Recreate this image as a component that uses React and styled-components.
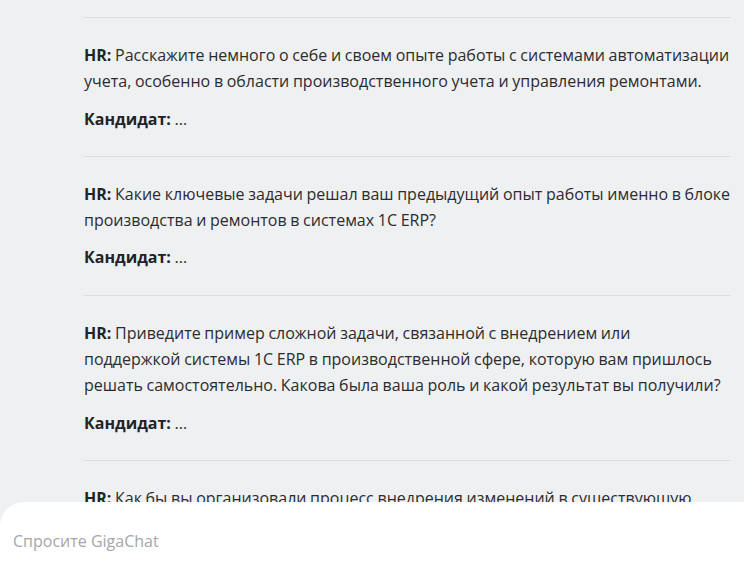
import React from 'react';
import styled, { createGlobalStyle } from 'styled-components';

const GlobalStyle = createGlobalStyle`
  html, body {
    margin: 0;
    padding: 0;
    background: #eff0f2;
  }
  body {
    font-family: "Open Sans", "Noto Sans", sans-serif;
    -webkit-font-smoothing: antialiased;
  }
`;

const Page = styled.div`
  height: 562px;
  display: flex;
  flex-direction: column;
  background: #eff0f2;
  overflow: hidden;
`;

const Feed = styled.div`
  flex: 1;
  min-height: 0;
  overflow: hidden;
  padding: 17px 13px 0 84px;
`;

const Question = styled.section`
  border-top: 1px solid #dcdde1;
  padding: 24px 0 24px;
`;

const Line = styled.p`
  margin: 0 0 ${({ $last }) => ($last ? '0' : '11px')};
  max-width: 646.3px;
  font-size: 16px;
  word-spacing: -0.5px;
  line-height: 26.3px;
  color: #2b2c30;

  b {
    font-weight: 700;
    color: #222326;
  }
`;

const InputBar = styled.div`
  flex: 0 0 60px;
  background: #ffffff;
  border-top-left-radius: 24px;
  display: flex;
  align-items: flex-start;
  padding: 28px 13px 0;
  box-sizing: border-box;
`;

const Field = styled.input`
  flex: 1;
  border: none;
  outline: none;
  background: transparent;
  font-family: "Open Sans", "Noto Sans", sans-serif;
  font-size: 16px;
  line-height: 22px;
  color: #2b2c30;
  padding: 0;

  &::placeholder {
    color: #a5a6aa;
  }
`;

const questions = [
  'Расскажите немного о себе и своем опыте работы с системами автоматизации учета, особенно в области производственного учета и управления ремонтами.',
  'Какие ключевые задачи решал ваш предыдущий опыт работы именно в блоке производства и ремонтов в системах 1С ERP?',
  'Приведите пример сложной задачи, связанной с внедрением или поддержкой системы 1С ERP в производственной сфере, которую вам пришлось решать самостоятельно. Какова была ваша роль и какой результат вы получили?',
  'Как бы вы организовали процесс внедрения изменений в существующую конфигурацию 1С ERP без остановки работы предприятия?',
];

export default function App() {
  return (
    <>
      <GlobalStyle />
      <Page>
        <Feed>
          {questions.map((q, i) => (
            <Question key={i}>
              <Line>
                <b>HR:</b> {q}
              </Line>
              <Line $last>
                <b>Кандидат:</b> ...
              </Line>
            </Question>
          ))}
        </Feed>
        <InputBar>
          <Field placeholder="Спросите GigaChat" />
        </InputBar>
      </Page>
    </>
  );
}
